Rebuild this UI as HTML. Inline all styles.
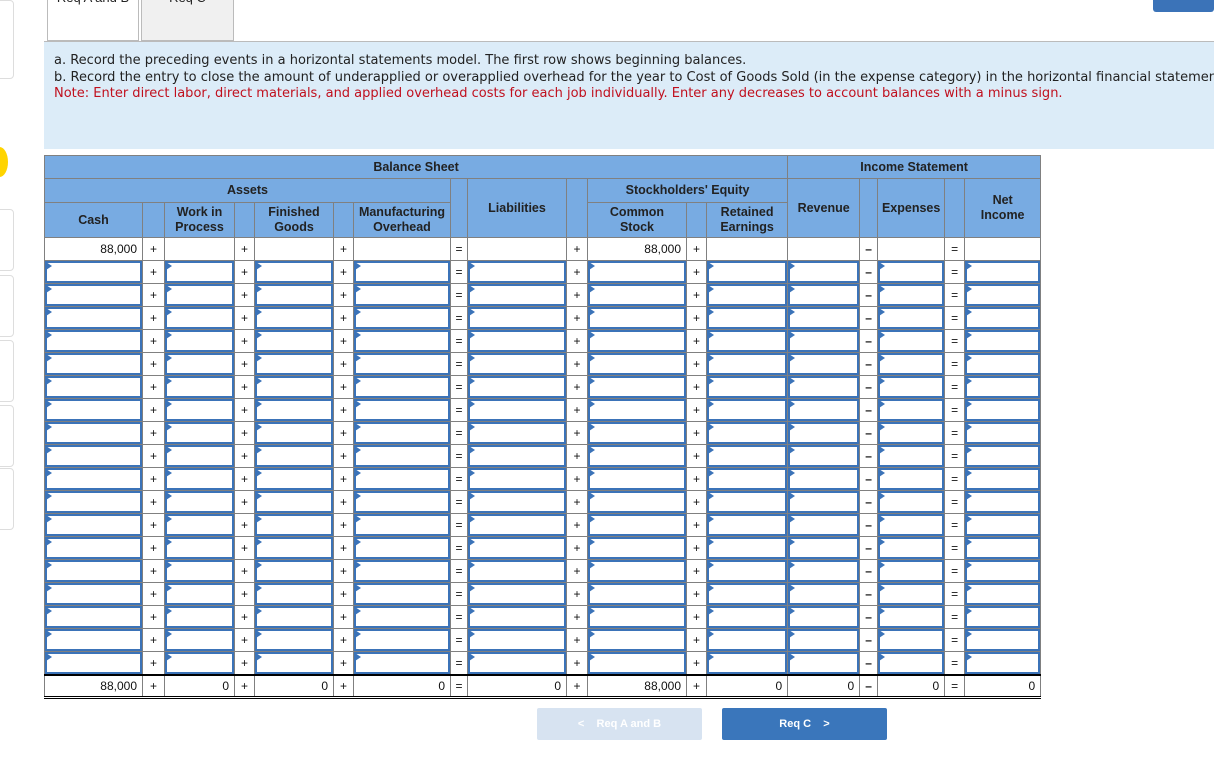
<!DOCTYPE html>
<html><head><meta charset="utf-8"><style>
body{margin:0;width:1214px;height:782px;position:relative;background:#fff;font-family:"Liberation Sans",Arial,sans-serif;overflow:hidden}
.tab{position:absolute;top:0;height:41px;border:1px solid #bbb;border-top:none;box-sizing:border-box;overflow:hidden;font-size:13px;color:#222;text-align:center}
.tab span{position:absolute;left:0;right:0;top:-10px;line-height:16px}
.info{position:absolute;left:44px;top:41px;width:1170px;height:108px;background:#dcecf8;border-top:1px solid #bbb;box-sizing:border-box;padding:11px 10px;font-family:"DejaVu Sans",Verdana,sans-serif;font-size:13px;line-height:16.5px;color:#222;white-space:nowrap;overflow:hidden}
.red{color:#c0101e}
table{position:absolute;left:44px;top:155px;border-collapse:collapse;table-layout:fixed;width:996px}
td,th{border:1px solid #808080;padding:0;font-size:12px;height:22px;box-sizing:border-box}
th{background:#78abe2;color:#222;font-size:12.5px;font-weight:bold;line-height:15px}
td{text-align:center;color:#111}
td.n{text-align:right;padding-right:5px}
td.i{position:relative}
td.i div{position:absolute;left:0;top:0;right:0;bottom:0;border:2px solid #3b73b8}
td.i div:before{content:"";position:absolute;left:-1px;top:-1px;border-left:6px solid #3b73b8;border-top:4px solid transparent;border-bottom:4px solid transparent}
tr.tot td{border-top:2px solid #000;border-bottom:3px double #000}
.btn{position:absolute;top:708px;height:32px;width:165px;border-radius:2px;color:#fff;font-size:11px;font-weight:bold;text-align:center;line-height:32px}
.side{position:absolute;left:-6px;width:18px;border:1px solid #ddd;border-radius:4px}
</style></head><body>
<div class="side" style="top:0;height:77px"></div>
<div class="side" style="top:209px;height:60px"></div>
<div class="side" style="top:275px;height:60px"></div>
<div class="side" style="top:340px;height:60px"></div>
<div class="side" style="top:405px;height:60px"></div>
<div class="side" style="top:468px;height:60px"></div>
<div style="position:absolute;left:-9px;top:147px;width:17px;height:30px;border-radius:50%;background:#ffd400"></div>
<div class="tab" style="left:47px;width:92px;background:#fff"><span>Req A and B</span></div>
<div class="tab" style="left:141px;width:93px;background:#f0f0f0"><span>Req C</span></div>
<div style="position:absolute;left:1153px;top:0;width:61px;height:12px;background:#3b73b8;border-radius:0 0 3px 3px"></div>
<div class="info">a. Record the preceding events in a horizontal statements model. The first row shows beginning balances.<br>b. Record the entry to close the amount of underapplied or overapplied overhead for the year to Cost of Goods Sold (in the expense category) in the horizontal financial statements model.<br><span class="red">Note: Enter direct labor, direct materials, and applied overhead costs for each job individually. Enter any decreases to account balances with a minus sign.</span></div>
<table>
<colgroup><col style="width:98px"><col style="width:22px"><col style="width:70px"><col style="width:20px"><col style="width:79px"><col style="width:20px"><col style="width:97px"><col style="width:17px"><col style="width:99px"><col style="width:21px"><col style="width:99px"><col style="width:20px"><col style="width:81px"><col style="width:72px"><col style="width:18px"><col style="width:67px"><col style="width:20px"><col style="width:76px"></colgroup>
<tr style="height:23px"><th colspan="13">Balance Sheet</th><th colspan="5">Income Statement</th></tr>
<tr style="height:24px"><th colspan="7">Assets</th><th rowspan="2"></th><th rowspan="2">Liabilities</th><th rowspan="2"></th><th colspan="3">Stockholders' Equity</th><th rowspan="2">Revenue</th><th rowspan="2"></th><th rowspan="2">Expenses</th><th rowspan="2"></th><th rowspan="2">Net<br>Income</th></tr>
<tr style="height:35px"><th>Cash</th><th></th><th>Work in<br>Process</th><th></th><th>Finished<br>Goods</th><th></th><th>Manufacturing<br>Overhead</th><th>Common<br>Stock</th><th></th><th>Retained<br>Earnings</th></tr>
<tr style="height:23px"><td class="n">88,000</td><td>+</td><td></td><td>+</td><td></td><td>+</td><td></td><td>=</td><td></td><td>+</td><td class="n">88,000</td><td>+</td><td></td><td></td><td><b>–</b></td><td></td><td>=</td><td></td></tr>
<tr style="height:23px"><td class="i"><div></div></td><td>+</td><td class="i"><div></div></td><td>+</td><td class="i"><div></div></td><td>+</td><td class="i"><div></div></td><td>=</td><td class="i"><div></div></td><td>+</td><td class="i"><div></div></td><td>+</td><td class="i"><div></div></td><td class="i"><div></div></td><td><b>–</b></td><td class="i"><div></div></td><td>=</td><td class="i"><div></div></td></tr>
<tr style="height:23px"><td class="i"><div></div></td><td>+</td><td class="i"><div></div></td><td>+</td><td class="i"><div></div></td><td>+</td><td class="i"><div></div></td><td>=</td><td class="i"><div></div></td><td>+</td><td class="i"><div></div></td><td>+</td><td class="i"><div></div></td><td class="i"><div></div></td><td><b>–</b></td><td class="i"><div></div></td><td>=</td><td class="i"><div></div></td></tr>
<tr style="height:23px"><td class="i"><div></div></td><td>+</td><td class="i"><div></div></td><td>+</td><td class="i"><div></div></td><td>+</td><td class="i"><div></div></td><td>=</td><td class="i"><div></div></td><td>+</td><td class="i"><div></div></td><td>+</td><td class="i"><div></div></td><td class="i"><div></div></td><td><b>–</b></td><td class="i"><div></div></td><td>=</td><td class="i"><div></div></td></tr>
<tr style="height:23px"><td class="i"><div></div></td><td>+</td><td class="i"><div></div></td><td>+</td><td class="i"><div></div></td><td>+</td><td class="i"><div></div></td><td>=</td><td class="i"><div></div></td><td>+</td><td class="i"><div></div></td><td>+</td><td class="i"><div></div></td><td class="i"><div></div></td><td><b>–</b></td><td class="i"><div></div></td><td>=</td><td class="i"><div></div></td></tr>
<tr style="height:23px"><td class="i"><div></div></td><td>+</td><td class="i"><div></div></td><td>+</td><td class="i"><div></div></td><td>+</td><td class="i"><div></div></td><td>=</td><td class="i"><div></div></td><td>+</td><td class="i"><div></div></td><td>+</td><td class="i"><div></div></td><td class="i"><div></div></td><td><b>–</b></td><td class="i"><div></div></td><td>=</td><td class="i"><div></div></td></tr>
<tr style="height:23px"><td class="i"><div></div></td><td>+</td><td class="i"><div></div></td><td>+</td><td class="i"><div></div></td><td>+</td><td class="i"><div></div></td><td>=</td><td class="i"><div></div></td><td>+</td><td class="i"><div></div></td><td>+</td><td class="i"><div></div></td><td class="i"><div></div></td><td><b>–</b></td><td class="i"><div></div></td><td>=</td><td class="i"><div></div></td></tr>
<tr style="height:23px"><td class="i"><div></div></td><td>+</td><td class="i"><div></div></td><td>+</td><td class="i"><div></div></td><td>+</td><td class="i"><div></div></td><td>=</td><td class="i"><div></div></td><td>+</td><td class="i"><div></div></td><td>+</td><td class="i"><div></div></td><td class="i"><div></div></td><td><b>–</b></td><td class="i"><div></div></td><td>=</td><td class="i"><div></div></td></tr>
<tr style="height:23px"><td class="i"><div></div></td><td>+</td><td class="i"><div></div></td><td>+</td><td class="i"><div></div></td><td>+</td><td class="i"><div></div></td><td>=</td><td class="i"><div></div></td><td>+</td><td class="i"><div></div></td><td>+</td><td class="i"><div></div></td><td class="i"><div></div></td><td><b>–</b></td><td class="i"><div></div></td><td>=</td><td class="i"><div></div></td></tr>
<tr style="height:23px"><td class="i"><div></div></td><td>+</td><td class="i"><div></div></td><td>+</td><td class="i"><div></div></td><td>+</td><td class="i"><div></div></td><td>=</td><td class="i"><div></div></td><td>+</td><td class="i"><div></div></td><td>+</td><td class="i"><div></div></td><td class="i"><div></div></td><td><b>–</b></td><td class="i"><div></div></td><td>=</td><td class="i"><div></div></td></tr>
<tr style="height:23px"><td class="i"><div></div></td><td>+</td><td class="i"><div></div></td><td>+</td><td class="i"><div></div></td><td>+</td><td class="i"><div></div></td><td>=</td><td class="i"><div></div></td><td>+</td><td class="i"><div></div></td><td>+</td><td class="i"><div></div></td><td class="i"><div></div></td><td><b>–</b></td><td class="i"><div></div></td><td>=</td><td class="i"><div></div></td></tr>
<tr style="height:23px"><td class="i"><div></div></td><td>+</td><td class="i"><div></div></td><td>+</td><td class="i"><div></div></td><td>+</td><td class="i"><div></div></td><td>=</td><td class="i"><div></div></td><td>+</td><td class="i"><div></div></td><td>+</td><td class="i"><div></div></td><td class="i"><div></div></td><td><b>–</b></td><td class="i"><div></div></td><td>=</td><td class="i"><div></div></td></tr>
<tr style="height:23px"><td class="i"><div></div></td><td>+</td><td class="i"><div></div></td><td>+</td><td class="i"><div></div></td><td>+</td><td class="i"><div></div></td><td>=</td><td class="i"><div></div></td><td>+</td><td class="i"><div></div></td><td>+</td><td class="i"><div></div></td><td class="i"><div></div></td><td><b>–</b></td><td class="i"><div></div></td><td>=</td><td class="i"><div></div></td></tr>
<tr style="height:23px"><td class="i"><div></div></td><td>+</td><td class="i"><div></div></td><td>+</td><td class="i"><div></div></td><td>+</td><td class="i"><div></div></td><td>=</td><td class="i"><div></div></td><td>+</td><td class="i"><div></div></td><td>+</td><td class="i"><div></div></td><td class="i"><div></div></td><td><b>–</b></td><td class="i"><div></div></td><td>=</td><td class="i"><div></div></td></tr>
<tr style="height:23px"><td class="i"><div></div></td><td>+</td><td class="i"><div></div></td><td>+</td><td class="i"><div></div></td><td>+</td><td class="i"><div></div></td><td>=</td><td class="i"><div></div></td><td>+</td><td class="i"><div></div></td><td>+</td><td class="i"><div></div></td><td class="i"><div></div></td><td><b>–</b></td><td class="i"><div></div></td><td>=</td><td class="i"><div></div></td></tr>
<tr style="height:23px"><td class="i"><div></div></td><td>+</td><td class="i"><div></div></td><td>+</td><td class="i"><div></div></td><td>+</td><td class="i"><div></div></td><td>=</td><td class="i"><div></div></td><td>+</td><td class="i"><div></div></td><td>+</td><td class="i"><div></div></td><td class="i"><div></div></td><td><b>–</b></td><td class="i"><div></div></td><td>=</td><td class="i"><div></div></td></tr>
<tr style="height:23px"><td class="i"><div></div></td><td>+</td><td class="i"><div></div></td><td>+</td><td class="i"><div></div></td><td>+</td><td class="i"><div></div></td><td>=</td><td class="i"><div></div></td><td>+</td><td class="i"><div></div></td><td>+</td><td class="i"><div></div></td><td class="i"><div></div></td><td><b>–</b></td><td class="i"><div></div></td><td>=</td><td class="i"><div></div></td></tr>
<tr style="height:23px"><td class="i"><div></div></td><td>+</td><td class="i"><div></div></td><td>+</td><td class="i"><div></div></td><td>+</td><td class="i"><div></div></td><td>=</td><td class="i"><div></div></td><td>+</td><td class="i"><div></div></td><td>+</td><td class="i"><div></div></td><td class="i"><div></div></td><td><b>–</b></td><td class="i"><div></div></td><td>=</td><td class="i"><div></div></td></tr>
<tr style="height:23px"><td class="i"><div></div></td><td>+</td><td class="i"><div></div></td><td>+</td><td class="i"><div></div></td><td>+</td><td class="i"><div></div></td><td>=</td><td class="i"><div></div></td><td>+</td><td class="i"><div></div></td><td>+</td><td class="i"><div></div></td><td class="i"><div></div></td><td><b>–</b></td><td class="i"><div></div></td><td>=</td><td class="i"><div></div></td></tr>
<tr class="tot" style="height:23px"><td class="n">88,000</td><td>+</td><td class="n">0</td><td>+</td><td class="n">0</td><td>+</td><td class="n">0</td><td>=</td><td class="n">0</td><td>+</td><td class="n">88,000</td><td>+</td><td class="n">0</td><td class="n">0</td><td><b>–</b></td><td class="n">0</td><td>=</td><td class="n">0</td></tr>
</table>
<div class="btn" style="left:537px;background:#d7e3f1">&lt;&nbsp;&nbsp;&nbsp;&nbsp;Req A and B</div>
<div class="btn" style="left:722px;background:#3a76bb">Req C&nbsp;&nbsp;&nbsp;&nbsp;&gt;</div>
</body></html>
